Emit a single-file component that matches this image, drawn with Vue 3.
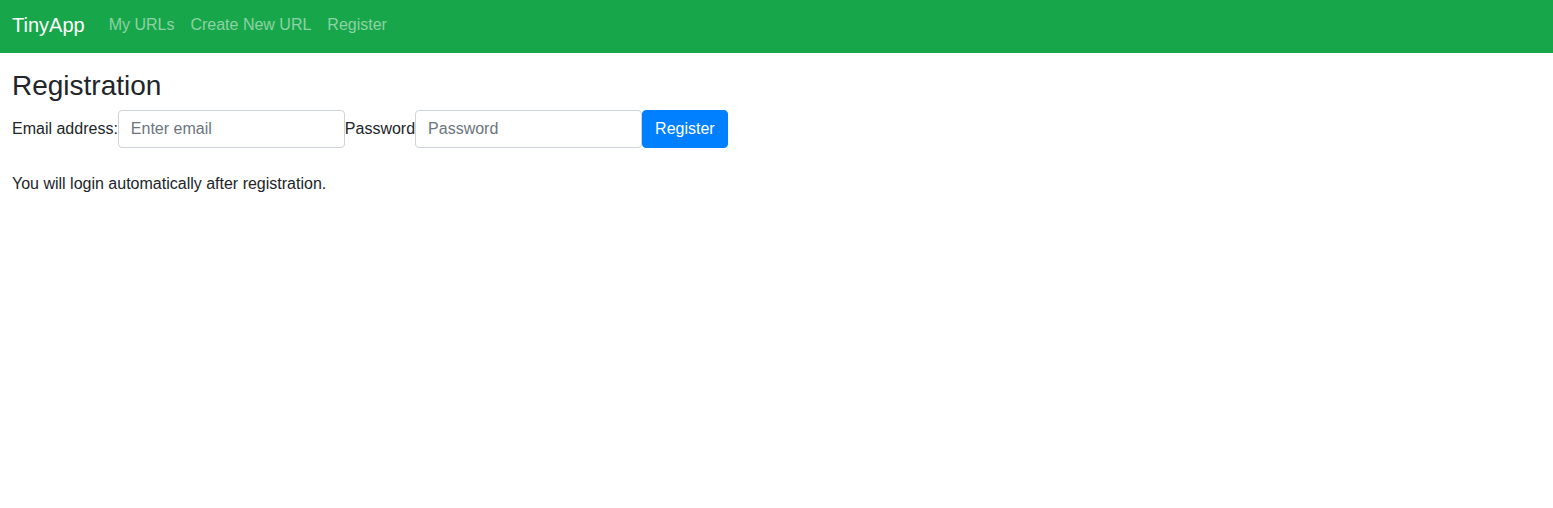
<script setup>
import { ref } from 'vue'

const links = ['My URLs', 'Create New URL', 'Register']
const email = ref('')
const password = ref('')
</script>

<template>
  <header>
    <nav class="navbar">
      <a class="brand" href="#">TinyApp</a>
      <div class="links">
        <a v-for="link in links" :key="link" class="link" href="#">{{ link }}</a>
      </div>
    </nav>
  </header>
  <main class="content">
    <h3 class="title">Registration</h3>
    <form class="form" @submit.prevent>
      <label for="email">Email address:</label>
      <input id="email" v-model="email" class="control" type="email" placeholder="Enter email" />
      <label for="password">Password</label>
      <input id="password" v-model="password" class="control" type="password" placeholder="Password" />
      <button class="submit" type="submit">Register</button>
    </form>
    <p class="note">You will login automatically after registration.</p>
  </main>
</template>

<style>
body {
  margin: 0;
  background: #fff;
}
</style>

<style scoped>
.navbar,
.content {
  font-family: "Liberation Sans", Arial, sans-serif;
  font-size: 16px;
  line-height: 24px;
  color: #212529;
}

.navbar {
  display: flex;
  align-items: center;
  padding: 5px 12px 8px;
  background: #18a64a;
}

.brand {
  margin-right: 16px;
  font-size: 20px;
  line-height: 30px;
  color: #fff;
  text-decoration: none;
}

.links {
  display: flex;
}

.link {
  padding: 8px;
  color: rgba(255, 255, 255, 0.5);
  text-decoration: none;
}

.content {
  padding: 16px 12px;
}

.title {
  margin: 0 0 7px;
  font-size: 28px;
  font-weight: 500;
  line-height: 34px;
}

.form {
  display: flex;
  flex-wrap: wrap;
  align-items: center;
}

.control {
  box-sizing: border-box;
  width: 227px;
  height: 38px;
  padding: 6px 12px;
  border: 1px solid #ced4da;
  border-radius: 4px;
  background: #fff;
  font: inherit;
  color: #495057;
}

.control::placeholder {
  color: #6c757d;
  opacity: 1;
}

.submit {
  padding: 6px 12px;
  border: 1px solid #0080ff;
  border-radius: 4px;
  background: #0080ff;
  font: inherit;
  color: #fff;
  cursor: pointer;
}

.note {
  margin: 24px 0 0;
}
</style>
